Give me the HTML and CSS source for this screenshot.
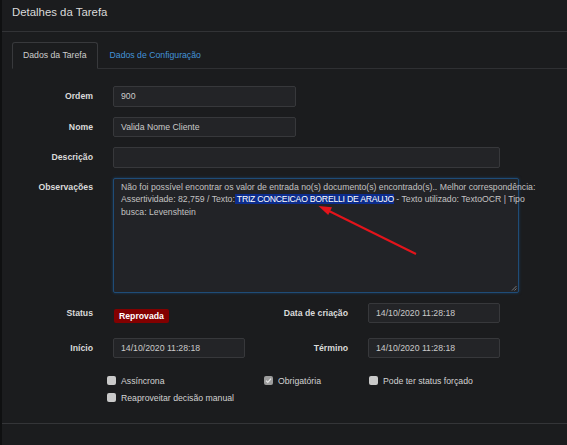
FILE: index.html
```html
<!DOCTYPE html>
<html lang="pt-BR">
<head>
<meta charset="utf-8">
<title>Detalhes da Tarefa</title>
<link rel="stylesheet" href="styles.css">
</head>
<body>
<div class="page">
  <div class="backdrop"></div>
  <div class="modal">
    <div class="modal-header">
      <div class="title">Detalhes da Tarefa</div>
    </div>
    <div class="modal-body">
      <div class="tabs">
        <div class="tab active">Dados da Tarefa</div>
        <div class="tab link">Dados de Configuração</div>
      </div>

      <div class="form-top">
        <div class="label">Ordem</div>
        <div class="input w-sm">900</div>
        <div class="label">Nome</div>
        <div class="input w-sm">Valida Nome Cliente</div>
        <div class="label">Descrição</div>
        <div class="input w-lg"></div>
        <div class="label label-top">Observações</div>
        <div class="textarea">
          <span class="line">Não foi possível encontrar os valor de entrada no(s) documento(s) encontrado(s).. Melhor correspondência:</span>
          <span class="line">Assertividade: 82,759 / Texto:<span class="sel"> TRIZ CONCEICAO BORELLI DE ARAUJO</span> - Texto utilizado: TextoOCR | Tipo</span>
          <span class="line">busca: Levenshtein</span>
          <svg class="grip" width="6" height="6" viewBox="0 0 6 6"><path d="M5.5 1 L1 5.5 M5.5 3.5 L3.5 5.5" stroke="#8a8b8e" stroke-width="0.8" fill="none"/></svg>
        </div>
      </div>

      <div class="form-bottom">
        <div class="label">Status</div>
        <div class="badge-cell"><span class="badge">Reprovada</span></div>
        <div class="label">Data de criação</div>
        <div class="input">14/10/2020 11:28:18</div>
        <div class="label">Início</div>
        <div class="input">14/10/2020 11:28:18</div>
        <div class="label">Término</div>
        <div class="input">14/10/2020 11:28:18</div>
      </div>

      <div class="checks">
        <div class="check"><span class="box"></span>Assíncrona</div>
        <div class="check"><span class="box checked"><svg width="9" height="9" viewBox="0 0 9 9"><path d="M2 4.6 L3.8 6.4 L7 2.6" stroke="#e6e6e6" stroke-width="1.3" fill="none"/></svg></span>Obrigatória</div>
        <div class="check"><span class="box"></span>Pode ter status forçado</div>
        <div class="check"><span class="box"></span>Reaproveitar decisão manual</div>
      </div>
    </div>
    <div class="modal-footer"></div>
  </div>
  <svg class="arrow" width="567" height="445" viewBox="0 0 567 445">
    <line x1="416" y1="254" x2="328" y2="210.5" stroke="#e3141b" stroke-width="2"/>
    <polygon points="318.5,206 332,207.2 328.2,215" fill="#e3141b"/>
  </svg>
</div>
</body>
</html>
```

FILE: styles.css
```css
html, body {
  margin: 0;
  padding: 0;
  background: #1b1c1e;
}

body {
  font-family: "Liberation Sans", Arial, sans-serif;
  font-size: 8.7px;
  color: #c8c8c8;
}

.page {
  position: relative;
  display: flex;
  width: 567px;
  height: 445px;
  overflow: hidden;
}

.backdrop {
  flex: none;
  width: 2px;
  background: #0f1011;
}

.modal {
  flex: 1;
  display: flex;
  flex-direction: column;
  background: #1b1c1e;
}

.modal-header {
  box-sizing: border-box;
  height: 32px;
  padding: 5px 0 0 10px;
  border-bottom: 1px solid #323336;
}

.title {
  font-size: 11.4px;
  line-height: 15px;
  color: #dadada;
}

.modal-body {
  padding: 10px 0 0 10px;
}

.tabs {
  display: flex;
  align-items: flex-start;
  height: 26px;
  border-bottom: 1px solid #2f3033;
}

.tab {
  padding: 0 10px;
  line-height: 25px;
  border: 1px solid transparent;
  white-space: nowrap;
}

.tab.link {
  padding: 0 11px 0 11px;
  color: #4393d8;
}

.tab.active {
  color: #cdcdcd;
  background: #1b1c1e;
  border-color: #38393c;
  border-bottom-color: #1b1c1e;
  border-radius: 3px 3px 0 0;
}

.form-top {
  display: grid;
  grid-template-columns: 81px auto;
  column-gap: 20px;
  row-gap: 10px;
  margin-top: 17px;
  justify-items: start;
}

.label {
  justify-self: stretch;
  align-self: center;
  text-align: right;
  font-weight: bold;
  color: #dadada;
  white-space: nowrap;
}

.label-top {
  align-self: start;
  padding-top: 3px;
  line-height: 12.7px;
}

.input {
  box-sizing: border-box;
  height: 20.5px;
  padding: 0 7px;
  display: flex;
  align-items: center;
  background: #232427;
  border: 1px solid #37383b;
  border-radius: 2px;
  color: #cacaca;
  white-space: nowrap;
}

.w-sm { width: 183px; }
.w-lg { width: 387px; }

.textarea {
  position: relative;
  box-sizing: border-box;
  width: 406px;
  height: 115px;
  padding: 2px 7px;
  background: #222327;
  border: 1px solid #1f4c77;
  border-radius: 2px;
  box-shadow: 0 0 3px rgba(30, 95, 160, 0.55);
  line-height: 12.7px;
  color: #c2c2c2;
}

.line {
  display: block;
  white-space: nowrap;
}

.sel {
  background: #0c2c8c;
  color: #ffffff;
  letter-spacing: -0.25px;
}

.grip {
  position: absolute;
  right: 1px;
  bottom: 1px;
}

.form-bottom {
  display: grid;
  grid-template-columns: 81px 132px 83px 132px;
  grid-auto-rows: 20px;
  column-gap: 20px;
  row-gap: 15px;
  margin-top: 10.5px;
}

.form-bottom .input {
  height: 20px;
}

.badge-cell {
  display: flex;
  align-items: flex-end;
  padding-left: 1px;
}

.badge {
  display: inline-block;
  padding: 0 5px;
  line-height: 14px;
  background: #820000;
  color: #ffffff;
  font-weight: bold;
  border-radius: 2px;
}

.checks {
  display: grid;
  grid-template-columns: 157px 105px auto;
  grid-auto-rows: 17px;
  margin: 14px 0 0 95px;
}

.check {
  display: flex;
  align-items: center;
  gap: 5px;
  color: #d2d2d2;
  white-space: nowrap;
}

.box {
  flex: none;
  display: inline-block;
  width: 9px;
  height: 9px;
  border-radius: 2px;
  background: #c9c9c9;
}

.box.checked {
  background: #9d9d9d;
}

.box svg {
  display: block;
}

.modal-footer {
  margin-top: 17px;
  border-top: 1px solid #343538;
  flex: 1;
}

.arrow {
  position: absolute;
  left: 0;
  top: 0;
  pointer-events: none;
}
```
